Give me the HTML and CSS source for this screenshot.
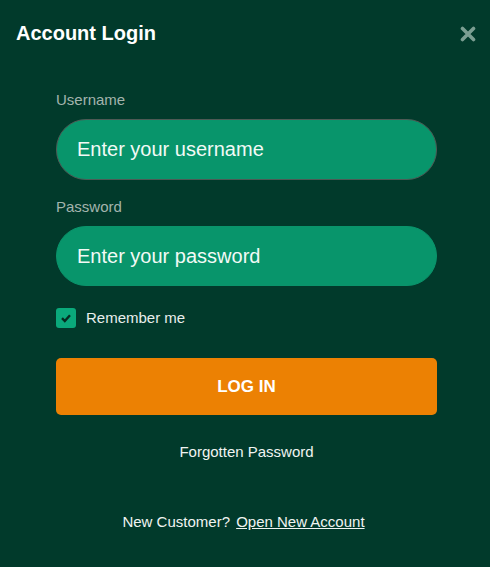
FILE: index.html
```html
<!DOCTYPE html>
<html>
<head>
    <meta charset="UTF-8">
    <title>Account Login</title>
    <link rel="stylesheet" href="styles.css">
</head>
<body>
    <div class="login-box">
        <div class="login-header">
            <h1>Account Login</h1>
            <span class="close">
                <svg width="16" height="16" viewBox="0 0 16 16">
                    <path d="M2.5 2.5 L13.5 13.5 M13.5 2.5 L2.5 13.5" stroke="#7b9e92" stroke-width="3.6" stroke-linecap="round"/>
                </svg>
            </span>
        </div>

        <form onsubmit="return false">
            <div class="field">
                <label for="username">Username</label>
                <input type="text" id="username" class="focused" placeholder="Enter your username">
            </div>
            <div class="field">
                <label for="password">Password</label>
                <input type="password" id="password" placeholder="Enter your password">
            </div>

            <label class="remember">
                <span class="check">
                    <svg width="12" height="12" viewBox="0 0 12 12">
                        <path d="M2 6.2 L4.8 9 L10 3.2" fill="none" stroke="#062b20" stroke-width="2.4"/>
                    </svg>
                </span>
                Remember me
            </label>

            <button type="submit" class="login-btn">LOG IN</button>

            <a class="forgot" href="#">Forgotten Password</a>

            <p class="new-customer">New Customer? <a href="#">Open New Account</a></p>
        </form>
    </div>
</body>
</html>
```

FILE: styles.css
```css
body {
    font-family: "Liberation Sans", Arial, sans-serif;
    margin: 0;
    background-color: #013a2b;
    color: #fff;
}

.login-box {
    width: 490px;
    height: 567px;
}

.login-header {
    display: flex;
    justify-content: space-between;
    align-items: center;
    padding: 21px 14px 0 16px;
}

.login-header h1 {
    margin: 0;
    font-size: 20px;
    line-height: 24px;
    font-weight: bold;
}

.close {
    display: flex;
    margin-top: 2px;
    cursor: pointer;
}

form {
    display: flex;
    flex-direction: column;
    width: 381px;
    margin: 46px 0 0 56px;
}

.field {
    display: flex;
    flex-direction: column;
    margin-bottom: 18px;
}

.field label {
    font-size: 15px;
    line-height: 18px;
    color: #a3b4ad;
    margin-bottom: 10px;
}

.field input {
    box-sizing: border-box;
    height: 60px;
    padding: 0 20px;
    border: 1px solid #0a946b;
    border-radius: 30px;
    background-color: #08956b;
    font-family: inherit;
    font-size: 20px;
    color: #fff;
    outline: none;
}

.field input.focused {
    height: 61px;
    border-color: #4d5a55;
}

.field input::placeholder {
    color: #f2faf6;
}

.remember {
    display: flex;
    align-items: center;
    gap: 10px;
    margin-top: 4px;
    font-size: 15px;
    line-height: 20px;
    color: #e8eeeb;
}

.check {
    display: flex;
    align-items: center;
    justify-content: center;
    width: 20px;
    height: 20px;
    border-radius: 3px;
    background-color: #0aa97b;
}

.login-btn {
    height: 57px;
    margin-top: 30px;
    border: none;
    border-radius: 5px;
    background-color: #ec8103;
    color: #fff;
    font-family: inherit;
    font-size: 17px;
    font-weight: bold;
    cursor: pointer;
}

.forgot {
    align-self: center;
    margin-top: 28px;
    font-size: 15px;
    line-height: 18px;
    color: #f0f4f2;
    text-decoration: none;
}

.new-customer {
    margin: 52px 0 0;
    text-align: center;
    font-size: 15px;
    line-height: 18px;
    color: #f0f4f2;
    padding-right: 6px;
}

.new-customer a {
    margin-left: 2px;
    color: #f0f4f2;
}
```
